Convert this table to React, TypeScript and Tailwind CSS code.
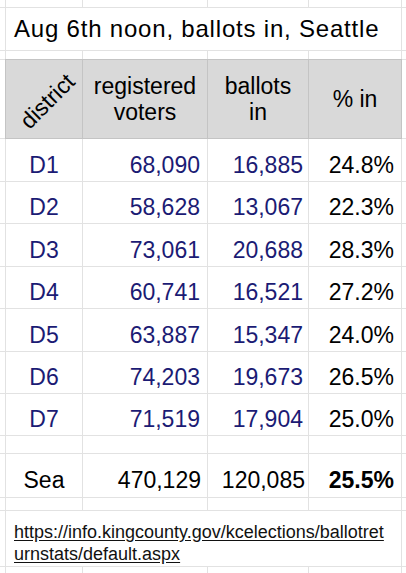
import React from "react";

const navy = "text-[#1b1b74]";

const data = [
  ["D1", "68,090", "16,885", "24.8%"],
  ["D2", "58,628", "13,067", "22.3%"],
  ["D3", "73,061", "20,688", "28.3%"],
  ["D4", "60,741", "16,521", "27.2%"],
  ["D5", "63,887", "15,347", "24.0%"],
  ["D6", "74,203", "19,673", "26.5%"],
  ["D7", "71,519", "17,904", "25.0%"],
];

function Edge() {
  return <div className="bg-white" />;
}

function Blank() {
  return <div className="bg-white" />;
}

function EmptyRow() {
  return (
    <>
      <Edge />
      <Blank />
      <Blank />
      <Blank />
      <Blank />
      <Edge />
    </>
  );
}

export default function App() {
  return (
    <div
      className="w-[406px] h-[573px] overflow-hidden bg-[#e2e2e2] grid grid-cols-[5px_76px_124px_100px_92px_4px] grid-rows-[7px_42px_8px_78px_42px_41px_42px_41px_42px_41px_41px_17px_43px_12px_55px_6px] gap-px text-black"
      style={{ fontFamily: '"Liberation Sans", Arial, sans-serif' }}
    >
      {/* top partial row */}
      <EmptyRow />

      {/* title */}
      <Edge />
      <div className="col-span-4 bg-white flex items-end pl-2 pb-[7px] text-[24px] leading-[28px] tracking-[0.8px] whitespace-nowrap">
        Aug 6th noon, ballots in, Seattle
      </div>
      <Edge />

      {/* spacer */}
      <EmptyRow />

      {/* header */}
      <Edge />
      <div className="relative bg-[#d9d9d9] outline outline-1 outline-[#c4c4c4] overflow-hidden flex items-center justify-center">
        <span className="block -rotate-45 text-[23px] leading-[26px] translate-x-[3px] translate-y-[2px]">
          district
        </span>
      </div>
      <div className="bg-[#d9d9d9] outline outline-1 outline-[#c4c4c4] flex items-center justify-center text-center text-[23px] leading-[26px]">
        registered
        <br />
        voters
      </div>
      <div className="bg-[#d9d9d9] outline outline-1 outline-[#c4c4c4] flex items-center justify-center text-center text-[23px] leading-[26px]">
        ballots
        <br />
        in
      </div>
      <div className="bg-[#d9d9d9] outline outline-1 outline-[#c4c4c4] flex items-center justify-center text-center text-[23px] leading-[26px]">
        % in
      </div>
      <Edge />

      {/* data rows */}
      {data.map((r) => (
        <React.Fragment key={r[0]}>
          <Edge />
          <div className={`bg-white flex items-end justify-center pb-[3px] text-[23px] leading-[26px] ${navy}`}>
            {r[0]}
          </div>
          <div className={`bg-white flex items-end justify-end pr-[7px] pb-[3px] text-[23px] leading-[26px] ${navy}`}>
            {r[1]}
          </div>
          <div className={`bg-white flex items-end justify-end pr-[5px] pb-[3px] text-[23px] leading-[26px] ${navy}`}>
            {r[2]}
          </div>
          <div className="bg-white flex items-end justify-end pr-[7px] pb-[3px] text-[23px] leading-[26px] text-black">
            {r[3]}
          </div>
          <Edge />
        </React.Fragment>
      ))}

      {/* spacer */}
      <EmptyRow />

      {/* total */}
      <Edge />
      <div className="bg-white flex items-end justify-center pb-[4px] text-[23px] leading-[26px]">
        Sea
      </div>
      <div className="bg-white flex items-end justify-end pr-[6px] pb-[4px] text-[23px] leading-[26px]">
        470,129
      </div>
      <div className="bg-white flex items-end justify-end pr-[3px] pb-[4px] text-[23px] leading-[26px]">
        120,085
      </div>
      <div className="bg-white flex items-end justify-end pr-[7px] pb-[4px] text-[23px] leading-[26px] font-bold">
        25.5%
      </div>
      <Edge />

      {/* spacer */}
      <EmptyRow />

      {/* link */}
      <Edge />
      <div className="col-span-4 bg-white flex items-end pl-2 pb-[1px] text-[18px] leading-[22px] whitespace-nowrap">
        <a className="underline underline-offset-[2px] text-[#111]" href="#">
          https://info.kingcounty.gov/kcelections/ballotret
          <br />
          urnstats/default.aspx
        </a>
      </div>
      <Edge />

      {/* bottom partial row */}
      <EmptyRow />
    </div>
  );
}
